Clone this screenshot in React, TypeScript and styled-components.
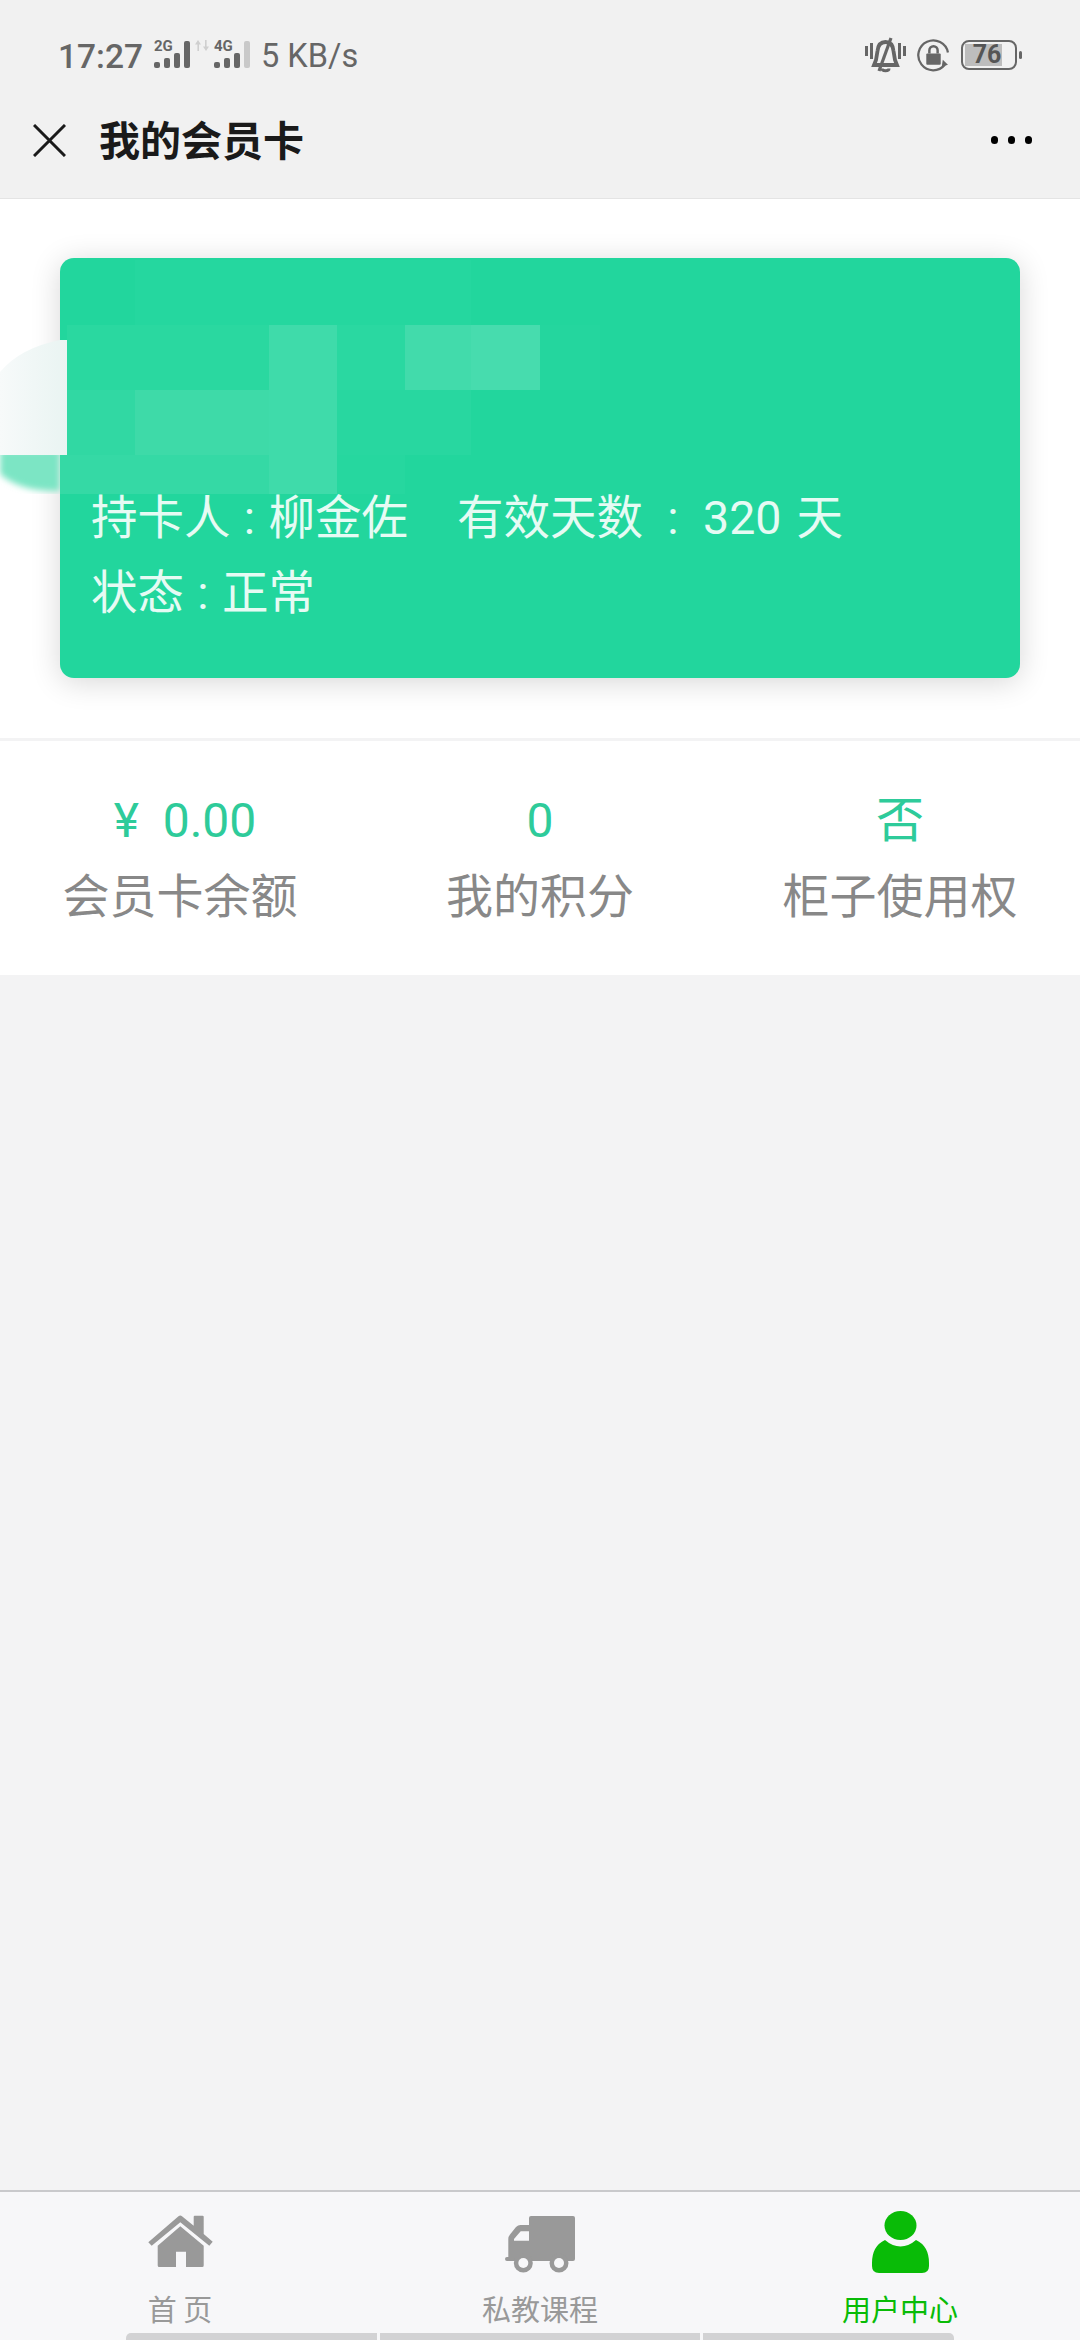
import React from 'react';
import styled, { createGlobalStyle } from 'styled-components';

const GlobalStyle = createGlobalStyle`
  html, body {
    margin: 0;
    padding: 0;
    background: #f3f3f4;
  }
  body {
    font-family: Roboto, "Noto Sans CJK SC", sans-serif;
  }
`;

const stats = [
  { value: '¥\u00a0\u00a00.00', label: '会员卡余额', shift: 10 },
  { value: '0', label: '我的积分', shift: 0 },
  { value: '否', label: '柜子使用权', shift: 0 },
];

// pixelated cover over the hidden card details
const mosaicCells = [
  { x: 135, y: 0, w: 336, h: 65, fill: '#25d79f' },
  { x: 67, y: 65, w: 202, h: 65, fill: '#2ad8a0' },
  { x: 269, y: 65, w: 68, h: 65, fill: '#3fdbaa' },
  { x: 337, y: 65, w: 68, h: 65, fill: '#2ad8a1' },
  { x: 405, y: 65, w: 66, h: 65, fill: '#42dbab' },
  { x: 471, y: 65, w: 69, h: 65, fill: '#47dcae' },
  { x: 540, y: 65, w: 60, h: 65, fill: '#24d69e' },
  { x: 67, y: 130, w: 68, h: 65, fill: '#31d8a3' },
  { x: 135, y: 130, w: 134, h: 65, fill: '#3edaa8' },
  { x: 269, y: 130, w: 68, h: 65, fill: '#3fdbaa' },
  { x: 337, y: 130, w: 134, h: 65, fill: '#28d7a0' },
  { x: 60, y: 195, w: 209, h: 39, fill: '#35d9a5' },
  { x: 269, y: 195, w: 68, h: 39, fill: '#3fdbaa' },
  { x: 337, y: 195, w: 68, h: 39, fill: '#26d79f' },
];

function Mosaic() {
  return (
    <MosaicLayer viewBox="0 0 600 234" width="600" height="234">
      <defs>
        <filter id="soft" x="-30%" y="-30%" width="160%" height="160%">
          <feGaussianBlur stdDeviation="3" />
        </filter>
        <linearGradient id="fade" x1="0" x2="1" y1="0" y2="0">
          <stop offset="0" stopColor="#f7fafa" />
          <stop offset="1" stopColor="#e9f4f2" />
        </linearGradient>
      </defs>
      <path d="M0 190 H60 V231 Q20 232 0 214 Z" fill="#7ce5c4" filter="url(#soft)" />
      <path d="M0 112 Q20 88 60 80 H68 V195 H0 Z" fill="url(#fade)" />
      {mosaicCells.map((cell, i) => (
        <rect key={i} x={cell.x} y={cell.y} width={cell.w} height={cell.h} fill={cell.fill} />
      ))}
    </MosaicLayer>
  );
}

function SignalBars({ label, dim }: { label: string; dim?: boolean }) {
  return (
    <SignalIcon>
      <SignalLabel>{label}</SignalLabel>
      <SignalBar $h={6} />
      <SignalBar $h={10} />
      <SignalBar $h={15} />
      <SignalBar $h={27} $dim={dim} />
    </SignalIcon>
  );
}

function DataArrowsIcon() {
  return (
    <DataArrows width="14" height="11" viewBox="0 0 14 11" fill="#cfcfcf">
      <path d="M3 0L6 4.500H4V11H2.400V4.500H0Z" />
      <path d="M11 11L8 6.500H10V0H11.600V6.500H14Z" />
    </DataArrows>
  );
}

function BellIcon() {
  return (
    <svg width="41" height="36" viewBox="0 0 41 36" fill="none" stroke="#666">
      <path d="M1.500 9v10M6.500 6v16M34.500 6v16M39.500 9v10" strokeWidth="3" />
      <path d="M20.500 5c-5.500 0-7.500 4-8 9l-1.500 9-2 5h23l-2-5-1.500-9c-.5-5-2.500-9-8-9z" strokeWidth="3.800" />
      <path d="M26 1L14 34" strokeWidth="3.200" />
      <path d="M17 31.500c0 3 7 3 7 0" strokeWidth="3" />
    </svg>
  );
}

function RotationLockIcon() {
  return (
    <svg width="33" height="33" viewBox="0 0 32 32" fill="none">
      <path d="M27 25A14.500 14.500 0 1 1 30 13" stroke="#666" strokeWidth="2.200" />
      <path d="M25 20l5 5-6 2z" fill="#666" />
      <rect x="9" y="14" width="14" height="11" rx="1" fill="#666" />
      <path d="M12 14v-3a4 4 0 0 1 8 0v3" stroke="#666" strokeWidth="2.400" />
    </svg>
  );
}

function HomeIcon() {
  return (
    <svg width="66" height="53" viewBox="0 0 66 53" fill="#999">
      <path d="M1.300 27.300L31.500 1.200Q33.300 0 35 1.200L46.700 10.700V1.700Q46.700 .7 47.700 .7H55.700Q56.700 .7 56.700 1.700V19L65.700 26.700L62.300 30.700L33.300 7.300L4.700 30.700Z" />
      <path d="M33.300 11.300L10.700 30.700V50.500Q10.700 52 12.200 52H29V36.700H39V52H55.200Q56.700 52 56.700 50.500V30.700Z" />
    </svg>
  );
}

function TruckIcon() {
  return (
    <svg width="70" height="57" viewBox="16 27 70 57" fill="#999">
      <path d="M40 29Q40 27 42 27H84Q86 27 86 29V70Q86 72 84 72H18A2 2 0 0 1 18 68H19.300V50Q19.300 47.500 21 45.500L27 38Q29 36 31.500 36H40Z" />
      <path d="M25 50L31.700 42.300H40V51.700H25Z" fill="#f7f7f9" />
      <circle cx="34.300" cy="74" r="9.500" />
      <circle cx="70" cy="74" r="9.500" />
      <circle cx="34.300" cy="74" r="5" fill="#f7f7f9" />
      <circle cx="70" cy="74" r="5" fill="#f7f7f9" />
    </svg>
  );
}

function UserIcon() {
  return (
    <svg width="57" height="62" viewBox="0 0 57 62" fill="#09bb07">
      <ellipse cx="28.500" cy="14.500" rx="16" ry="14.500" />
      <path d="M13 29Q20.500 35.500 28.500 35.500Q36.500 35.500 44 29Q57 35 57 52V55Q57 62 50 62H7Q0 62 0 55V52Q0 35 13 29Z" />
    </svg>
  );
}

export default function App() {
  return (
    <Page>
      <GlobalStyle />
      <Header>
        <StatusBar>
          <StatusLeft>
            <Clock>17:27</Clock>
            <SignalBars label="2G" />
            <DataArrowsIcon />
            <SignalBars label="4G" dim />
            <Speed>5 KB/s</Speed>
          </StatusLeft>
          <StatusRight>
            <BellIcon />
            <RotationLockIcon />
            <Battery>
              <BatteryFill />
              <BatteryLevel>76</BatteryLevel>
              <BatteryTip />
            </Battery>
          </StatusRight>
        </StatusBar>
        <NavBar>
          <CloseIcon width="33" height="33" viewBox="0 0 33 33">
            <path d="M1 1L32 32M32 1L1 32" stroke="#1a1a1a" strokeWidth="3" />
          </CloseIcon>
          <Title>我的会员卡</Title>
          <MoreDots>
            <Dot />
            <Dot />
            <Dot />
          </MoreDots>
        </NavBar>
      </Header>

      <CardSection>
        <Card>
          <CardLine>
            持卡人<Colon $w={38}>:</Colon>柳金佐<HolderGap />有效天数<Colon $w={60}>:</Colon>320<DayGap />天
          </CardLine>
          <CardLine>
            状态<Colon $w={38}>:</Colon>正常
          </CardLine>
        </Card>
        <Mosaic />
      </CardSection>

      <StatsRow>
        {stats.map((stat) => (
          <Stat key={stat.label}>
            <StatValue $shift={stat.shift}>{stat.value}</StatValue>
            <StatLabel>{stat.label}</StatLabel>
          </Stat>
        ))}
      </StatsRow>

      <Filler />

      <TabBar>
        <Tabs>
          <Tab>
            <TabIcon $lift={5}><HomeIcon /></TabIcon>
            <TabLabel>首 页</TabLabel>
          </Tab>
          <Tab>
            <TabIcon><TruckIcon /></TabIcon>
            <TabLabel>私教课程</TabLabel>
          </Tab>
          <Tab>
            <TabIcon><UserIcon /></TabIcon>
            <TabLabel $active>用户中心</TabLabel>
          </Tab>
        </Tabs>
        <HomeBars>
          <HomeBar $w={251} $first />
          <HomeBar $w={320} />
          <HomeBar $w={251} $last />
        </HomeBars>
      </TabBar>
    </Page>
  );
}

const Page = styled.div`
  width: 1080px;
  height: 2340px;
  display: flex;
  flex-direction: column;
  overflow: hidden;
  background: #f3f3f4;
`;

const Header = styled.header`
  flex: none;
  height: 198px;
  background: #f1f1f1;
  border-bottom: 1px solid #e4e4e4;
`;

const StatusBar = styled.div`
  height: 84px;
  padding: 0 63px 0 58px;
  box-sizing: border-box;
  display: flex;
  align-items: flex-end;
  justify-content: space-between;
`;

const StatusLeft = styled.div`
  display: flex;
  align-items: flex-end;
  height: 48px;
  color: #666;
`;

const Clock = styled.span`
  font-size: 33.500px;
  line-height: 36px;
  font-weight: 500;
  color: #666;
  margin-right: 11px;
  margin-bottom: 9px;
`;

const SignalIcon = styled.span`
  position: relative;
  display: flex;
  align-items: flex-end;
  gap: 4px;
  height: 27px;
  margin-bottom: 16px;
`;

const SignalLabel = styled.span`
  position: absolute;
  left: 0;
  top: -2px;
  font-size: 15px;
  line-height: 14px;
  font-weight: 700;
  color: #666;
`;

const SignalBar = styled.span<{ $h: number; $dim?: boolean }>`
  width: 6px;
  height: ${(p) => p.$h}px;
  border-radius: 2px;
  background: ${(p) => (p.$dim ? '#c9c9c9' : '#666')};
`;

const DataArrows = styled.svg`
  flex: none;
  align-self: flex-start;
  margin: 4px 5px 0;
`;

const Speed = styled.span`
  font-size: 32.500px;
  line-height: 36px;
  color: #666;
  margin-left: 11px;
  margin-bottom: 10px;
`;

const StatusRight = styled.div`
  display: flex;
  align-items: center;
  gap: 11px;
  height: 48px;
  margin-bottom: 5px;
`;

const Battery = styled.div`
  position: relative;
  width: 56px;
  height: 30px;
  box-sizing: border-box;
  border: 2px solid #666;
  border-radius: 8px;
`;

const BatteryFill = styled.div`
  position: absolute;
  left: 2px;
  top: 2px;
  bottom: 2px;
  width: 37px;
  background: #bdbdbd;
`;

const BatteryLevel = styled.span`
  position: absolute;
  left: 0;
  top: 0;
  width: 48px;
  text-align: center;
  font-size: 25px;
  line-height: 26px;
  font-weight: 700;
  color: #555;
`;

const BatteryTip = styled.div`
  position: absolute;
  right: -7px;
  top: 9px;
  width: 3px;
  height: 8px;
  border-radius: 2px;
  background: #666;
`;

const NavBar = styled.nav`
  height: 114px;
  padding: 0 48px 2px 33px;
  box-sizing: border-box;
  display: flex;
  align-items: center;
`;

const CloseIcon = styled.svg`
  flex: none;
`;

const Title = styled.h1`
  flex: 1;
  margin: 0 0 5px 33px;
  font-family: "Noto Sans CJK SC", sans-serif;
  font-size: 41px;
  line-height: 56px;
  font-weight: 700;
  color: #1a1a1a;
`;

const MoreDots = styled.div`
  display: flex;
  gap: 9.500px;
`;

const Dot = styled.span`
  width: 7.500px;
  height: 7.500px;
  border-radius: 50%;
  background: #000;
`;

const CardSection = styled.section`
  position: relative;
  flex: none;
  height: 539px;
  padding: 59px 60px 0;
  box-sizing: border-box;
  background: #fff;
`;

const Card = styled.div`
  height: 420px;
  padding: 223px 32px 0 31px;
  box-sizing: border-box;
  border-radius: 14px;
  background: #22d69d;
  box-shadow: 0 4px 30px rgba(0, 0, 0, 0.16);
`;

const CardLine = styled.div`
  font-family: Roboto, "Noto Sans CJK SC", sans-serif;
  font-size: 46.500px;
  line-height: 75px;
  color: #e6fbf4;
  white-space: pre;
`;

const Colon = styled.span<{ $w: number }>`
  display: inline-block;
  width: ${(p) => p.$w}px;
  text-align: center;
`;

const HolderGap = styled.span`
  display: inline-block;
  width: 49px;
`;

const DayGap = styled.span`
  display: inline-block;
  width: 15px;
`;

const MosaicLayer = styled.svg`
  position: absolute;
  left: 0;
  top: 61px;
`;

const StatsRow = styled.section`
  flex: none;
  height: 234px;
  margin-top: 3px;
  box-sizing: border-box;
  padding-top: 48px;
  display: grid;
  grid-template-columns: repeat(3, 1fr);
  background: #fff;
`;

const Stat = styled.div`
  display: flex;
  flex-direction: column;
  align-items: center;
`;

const StatValue = styled.div<{ $shift: number }>`
  margin-left: ${(p) => p.$shift}px;
  font-family: Roboto, "Noto Sans CJK SC", sans-serif;
  font-size: 48px;
  line-height: 64px;
  color: #2ecb9a;
`;

const StatLabel = styled.div`
  margin-top: 8px;
  font-family: "Noto Sans CJK SC", sans-serif;
  font-size: 47px;
  line-height: 64px;
  color: #888;
`;

const Filler = styled.div`
  flex: 1;
`;

const TabBar = styled.footer`
  flex: none;
  height: 150px;
  box-sizing: border-box;
  border-top: 2px solid #c9c9cc;
  background: #f7f7f9;
  display: flex;
  flex-direction: column;
`;

const Tabs = styled.div`
  flex: 1;
  display: grid;
  grid-template-columns: repeat(3, 1fr);
`;

const Tab = styled.div`
  display: flex;
  flex-direction: column;
  align-items: center;
`;

const TabIcon = styled.div<{ $lift?: number }>`
  height: 64px;
  margin-top: 17px;
  box-sizing: border-box;
  padding-bottom: ${(p) => p.$lift ?? 0}px;
  display: flex;
  align-items: flex-end;
`;

const TabLabel = styled.div<{ $active?: boolean }>`
  margin-top: 17px;
  font-family: "Noto Sans CJK SC", sans-serif;
  font-size: 29px;
  line-height: 36px;
  color: ${(p) => (p.$active ? '#09bb07' : '#999')};
`;

const HomeBars = styled.div`
  flex: none;
  display: flex;
  justify-content: center;
  gap: 3px;
`;

const HomeBar = styled.span<{ $w: number; $first?: boolean; $last?: boolean }>`
  width: ${(p) => p.$w}px;
  height: 7px;
  background: #d2d2d4;
  border-radius: ${(p) => (p.$first ? '5px 0 0 0' : p.$last ? '0 5px 0 0' : '0')};
`;
